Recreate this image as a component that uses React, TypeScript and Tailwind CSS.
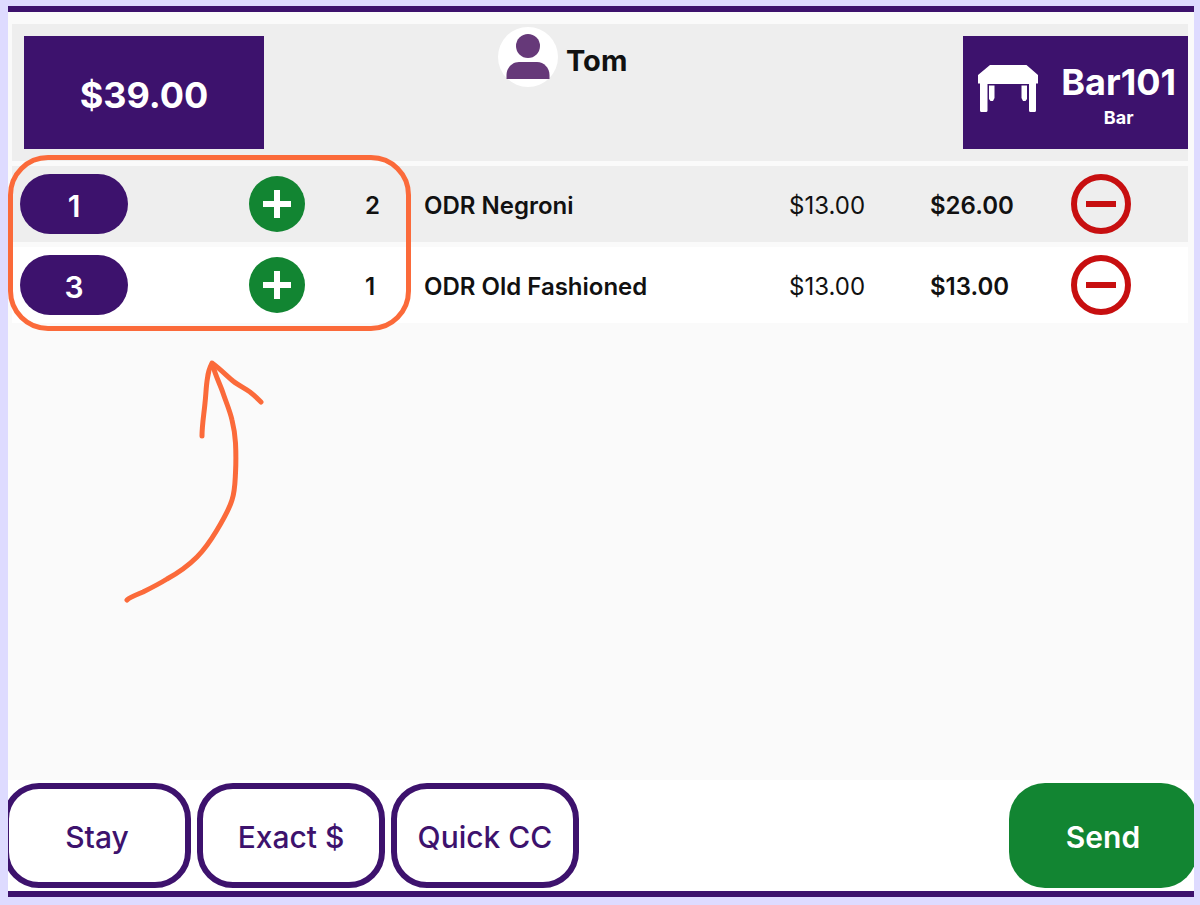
type OrderLine = {
  seat: number;
  qty: number;
  name: string;
  price: string;
  total: string;
};

const ORDER: OrderLine[] = [
  { seat: 1, qty: 2, name: 'ODR Negroni', price: '$13.00', total: '$26.00' },
  { seat: 3, qty: 1, name: 'ODR Old Fashioned', price: '$13.00', total: '$13.00' },
];

const ACTIONS = ['Stay', 'Exact $', 'Quick CC'];

// ─── Icons ────────────────────────────────────────────────────────────────────
function UserIcon() {
  return (
    <svg viewBox="0 0 60 60" className="size-15 shrink-0" aria-hidden="true">
      <circle cx="30" cy="30" r="30" fill="#fff" />
      <circle cx="30" cy="19" r="12" fill="#663979" />
      <path d="M8.500 52V48C8.500 41 14 35 21 35H39C46 35 51.500 41 51.500 48V52Z" fill="#663979" />
    </svg>
  );
}

function TableIcon() {
  return (
    <svg viewBox="0 0 60 47" className="h-[47px] w-15 shrink-0" fill="#fff" aria-hidden="true">
      <path d="M12 0H48.500L60 10V18.500H58V45.500Q58 47 56.500 47H52.500Q51 47 51 45.500V19H9.500V45.500Q9.500 47 8 47H3.500Q2 47 2 45.500V18.500H0V10Z" />
      <path d="M11 20.500H16.500V33L15 36H12.500L11 34Z" />
      <path d="M43.500 20.500H49V34L47.500 36H45L43.500 33Z" />
    </svg>
  );
}

function PlusIcon() {
  return (
    <svg viewBox="0 0 56 56" className="size-14" aria-hidden="true">
      <circle cx="28" cy="28" r="28" fill="#128532" />
      <path d="M28 14V42M14 28H42" stroke="#fff" strokeWidth="6" />
    </svg>
  );
}

function MinusIcon() {
  return (
    <svg viewBox="0 0 60 60" className="size-15" aria-hidden="true">
      <circle cx="30" cy="30" r="27" fill="none" stroke="#c70f10" strokeWidth="6" />
      <path d="M15 30H45" stroke="#c70f10" strokeWidth="6" />
    </svg>
  );
}

// Hand-drawn arrow pointing at the highlighted cells
function Arrow() {
  return (
    <svg
      viewBox="0 0 144 246"
      className="absolute top-[198px] left-[108px] h-[246px] w-36"
      fill="none"
      stroke="#fb6a3a"
      strokeWidth="5"
      strokeLinecap="round"
      strokeLinejoin="round"
      aria-hidden="true"
    >
      <path d="M7 241C10 238 16 236 23 233C31 229 39 225 47 220C58 214 69 206 77 198C85 190 91 181 97 171C103 161 109 151 112 141C115 132 115 123 115.500 114C116 104 116 94 115.500 84C115 76 114 69 112 61C110 52 106 43 103 34C100 25 95 16 92.500 5" />
      <path d="M82 77C82 66 84 55 85 44C86 36 86 27 87.500 19C88 13 90 8 92 4C99 9 106 16 113 22C118 26 124 29 130 33C134 36 138 40 141 43" />
    </svg>
  );
}

// ─── Header ───────────────────────────────────────────────────────────────────
function Header() {
  return (
    <header className="mt-3 mr-1.5 ml-1 grid grid-cols-[240px_1fr_2fr_225px] bg-[#eee] pl-3">
      <button
        type="button"
        className="my-3 flex h-[113px] items-center justify-center bg-[#3d126d] pt-1 text-4xl font-bold text-white"
      >
        $39.00
      </button>
      <div className="col-start-3 mt-[3px] flex h-15 items-center gap-2 pl-px">
        <UserIcon />
        <span className="pt-2 text-[29px] leading-9 font-bold">Tom</span>
      </div>
      <button
        type="button"
        className="my-3 flex h-[113px] items-center justify-between bg-[#3d126d] pr-3 pl-[15px] text-white"
      >
        <span className="pb-2">
          <TableIcon />
        </span>
        <span className="flex flex-col items-center gap-0.5 pt-2">
          <span className="text-4xl font-bold">Bar101</span>
          <span className="text-lg font-bold">Bar</span>
        </span>
      </button>
    </header>
  );
}

// ─── Order lines ──────────────────────────────────────────────────────────────
function OrderTable() {
  return (
    <section className="relative mr-1.5 ml-1 flex-1">
      <table className="w-full table-fixed border-separate border-spacing-x-0 border-spacing-y-[5px] text-left text-2xl font-semibold">
        <colgroup>
          <col className="w-[229px]" />
          <col className="w-[116px]" />
          <col className="w-[59px]" />
          <col />
          <col className="w-[141px]" />
          <col className="w-[141px]" />
          <col className="w-[125px]" />
        </colgroup>
        <tbody>
          {ORDER.map((line) => (
            <tr key={line.seat} className="h-[76px] odd:bg-[#eee] even:bg-white">
              <td className="pl-2">
                <button
                  type="button"
                  className="flex h-15 w-[108px] items-center justify-center rounded-full bg-[#3d126d] pt-1.5 text-[30px] text-white"
                >
                  {line.seat}
                </button>
              </td>
              <td className="pl-2">
                <button type="button" aria-label={`Add ${line.name}`} className="block">
                  <PlusIcon />
                </button>
              </td>
              <td className="pt-[3px] pl-2">{line.qty}</td>
              <td className="pt-[3px] pl-2">{line.name}</td>
              <td className="pt-[3px] pl-2 font-normal">{line.price}</td>
              <td className="pt-[3px] pl-2">{line.total}</td>
              <td className="pl-2">
                <button type="button" aria-label={`Remove ${line.name}`} className="block">
                  <MinusIcon />
                </button>
              </td>
            </tr>
          ))}
        </tbody>
      </table>

      <div className="pointer-events-none absolute -top-1.5 -left-1 h-44 w-[403px] rounded-[40px] border-5 border-[#fb6a3a]" />
      <Arrow />
    </section>
  );
}

// ─── Footer ───────────────────────────────────────────────────────────────────
function Footer() {
  return (
    <footer className="flex bg-white py-[3px] text-[30px] font-medium">
      <div className="-ml-[5px] flex gap-1.5">
        {ACTIONS.map((label) => (
          <button
            key={label}
            type="button"
            className="h-[105px] w-[188px] rounded-[36px] border-6 border-[#3d126d] pt-1 text-[#3d126d]"
          >
            {label}
          </button>
        ))}
      </div>
      <button
        type="button"
        className="-mr-[3px] ml-auto h-[105px] w-[188px] rounded-[36px] bg-[#128532] pt-1 font-semibold text-white"
      >
        Send
      </button>
    </footer>
  );
}

export default function App() {
  return (
    <div className="flex min-h-screen flex-col bg-[#dedbff] pt-1.5 pr-1.5 pb-2 pl-2 font-['Inter','Liberation_Sans',sans-serif] text-[#111]">
      <main className="flex flex-1 flex-col overflow-hidden border-y-6 border-[#3d126d] bg-[#fafafa]">
        <Header />
        <OrderTable />
        <Footer />
      </main>
    </div>
  );
}
